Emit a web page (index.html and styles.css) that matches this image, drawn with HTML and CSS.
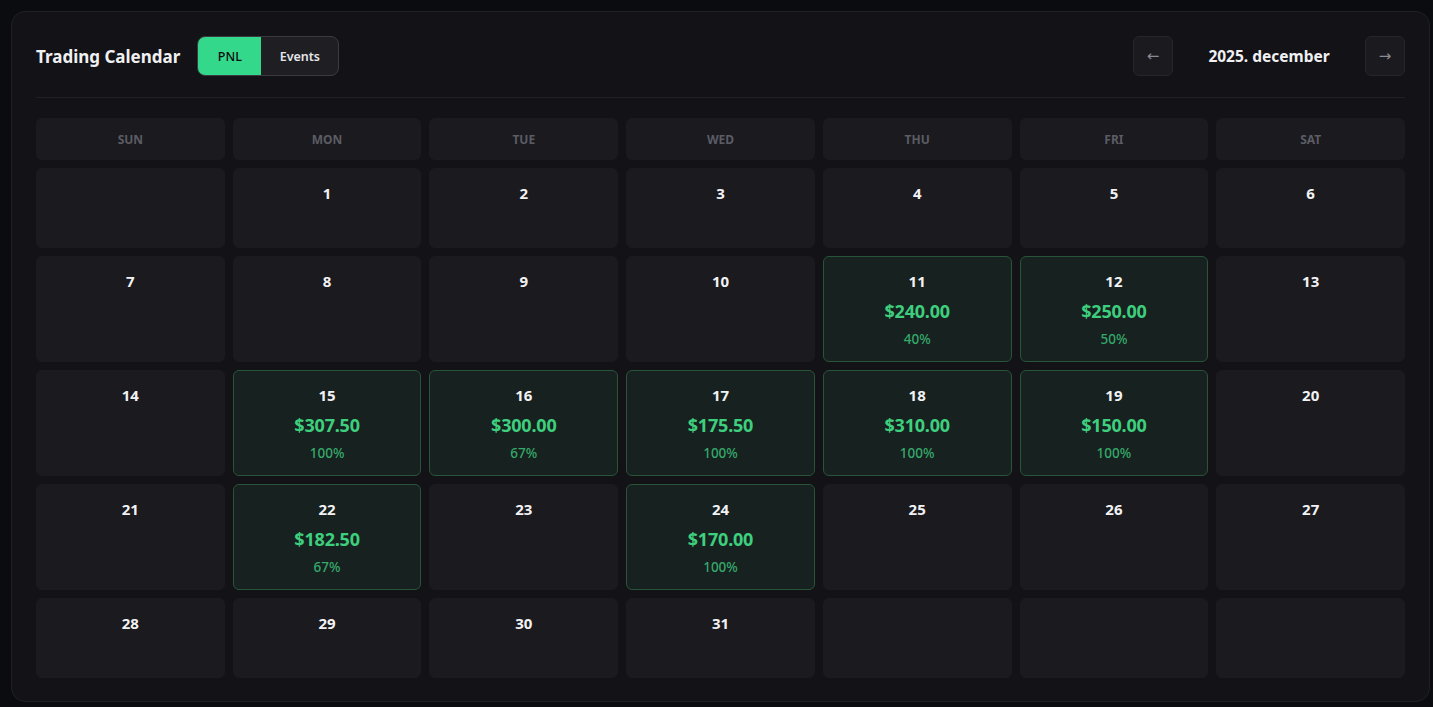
FILE: index.html
```html
<!DOCTYPE html>
<html>
<head>
<meta charset="utf-8">
<link rel="stylesheet" href="styles.css">
</head>
<body>
<div class="card">
  <div class="header">
    <div class="left">
      <h1 class="title">Trading Calendar</h1>
      <div class="toggle">
        <button class="tab active">PNL</button>
        <button class="tab">Events</button>
      </div>
    </div>
    <div class="nav">
      <button class="navbtn">&larr;</button>
      <div class="month">2025. december</div>
      <button class="navbtn">&rarr;</button>
    </div>
  </div>
  <div class="grid">
    <div class="dow">SUN</div><div class="dow">MON</div><div class="dow">TUE</div><div class="dow">WED</div><div class="dow">THU</div><div class="dow">FRI</div><div class="dow">SAT</div>

    <div class="cell"></div>
    <div class="cell"><div class="d">1</div></div>
    <div class="cell"><div class="d">2</div></div>
    <div class="cell"><div class="d">3</div></div>
    <div class="cell"><div class="d">4</div></div>
    <div class="cell"><div class="d">5</div></div>
    <div class="cell"><div class="d">6</div></div>

    <div class="cell"><div class="d">7</div></div>
    <div class="cell"><div class="d">8</div></div>
    <div class="cell"><div class="d">9</div></div>
    <div class="cell"><div class="d">10</div></div>
    <div class="cell win"><div class="d">11</div><div class="amt">$240.00</div><div class="pct">40%</div></div>
    <div class="cell win"><div class="d">12</div><div class="amt">$250.00</div><div class="pct">50%</div></div>
    <div class="cell"><div class="d">13</div></div>

    <div class="cell"><div class="d">14</div></div>
    <div class="cell win"><div class="d">15</div><div class="amt">$307.50</div><div class="pct">100%</div></div>
    <div class="cell win"><div class="d">16</div><div class="amt">$300.00</div><div class="pct">67%</div></div>
    <div class="cell win"><div class="d">17</div><div class="amt">$175.50</div><div class="pct">100%</div></div>
    <div class="cell win"><div class="d">18</div><div class="amt">$310.00</div><div class="pct">100%</div></div>
    <div class="cell win"><div class="d">19</div><div class="amt">$150.00</div><div class="pct">100%</div></div>
    <div class="cell"><div class="d">20</div></div>

    <div class="cell"><div class="d">21</div></div>
    <div class="cell win"><div class="d">22</div><div class="amt">$182.50</div><div class="pct">67%</div></div>
    <div class="cell"><div class="d">23</div></div>
    <div class="cell win"><div class="d">24</div><div class="amt">$170.00</div><div class="pct">100%</div></div>
    <div class="cell"><div class="d">25</div></div>
    <div class="cell"><div class="d">26</div></div>
    <div class="cell"><div class="d">27</div></div>

    <div class="cell"><div class="d">28</div></div>
    <div class="cell"><div class="d">29</div></div>
    <div class="cell"><div class="d">30</div></div>
    <div class="cell"><div class="d">31</div></div>
    <div class="cell"></div>
    <div class="cell"></div>
    <div class="cell"></div>
  </div>
</div>
</body>
</html>
```
FILE: styles.css
```css
* { box-sizing: border-box; }
html, body { margin: 0; padding: 0; }
body {
  background: #0b0c10;
  font-family: "Noto Sans", "Open Sans", sans-serif;
  color: #f0f0f2;
  padding: 11px 3px 5px 11px;
  height: 707px;
}
.card {
  background: #131317;
  border: 1px solid #1f2026;
  border-radius: 14px;
  padding: 24px 24px 23px 24px;
  width: 1419px;
}
.header {
  display: flex;
  justify-content: space-between;
  align-items: center;
  padding-bottom: 21px;
  border-bottom: 1px solid #1f2026;
  margin-bottom: 20px;
}
.left { display: flex; align-items: center; gap: 17px; }
.title {
  margin: 0;
  font-size: 17px;
  font-weight: 700;
  color: #f0f0f2;
}
.toggle {
  display: flex;
  height: 40px;
  border: 1px solid #3a3a40;
  border-radius: 8px;
  overflow: hidden;
  background: #1e1e23;
}
.tab {
  border: 0;
  background: transparent;
  color: #e6e6ea;
  font-family: inherit;
  font-size: 12.5px;
  font-weight: 600;
  padding: 0;
  cursor: pointer;
}
.tab:first-child { width: 63px; }
.tab:last-child { width: 77px; }
.tab.active { background: #34d88a; color: #0b0c10; font-weight: 500; }
.nav { display: flex; align-items: center; }
.navbtn {
  width: 40px;
  height: 40px;
  border: 1px solid #25252b;
  border-radius: 6px;
  background: #1a1a1f;
  color: #8a8a92;
  font-size: 15px;
  font-family: "DejaVu Sans", sans-serif;
  padding: 0;
}
.month {
  width: 192px;
  text-align: center;
  font-size: 15.5px;
  font-weight: 700;
  color: #f0f0f2;
}
.grid {
  display: grid;
  grid-template-columns: repeat(7, 1fr);
  gap: 8px;
}
.dow {
  height: 42px;
  background: #1a1a1f;
  border-radius: 6px;
  display: flex;
  align-items: center;
  justify-content: center;
  font-size: 12px;
  font-weight: 700;
  color: #5c5c64;
}
.cell {
  min-height: 80px;
  background: #1a1a1f;
  border: 1px solid #1a1a1f;
  border-radius: 6px;
  padding: 13px 8px 13px;
  display: flex;
  flex-direction: column;
  align-items: center;
}
.d {
  font-size: 15px;
  font-weight: 700;
  line-height: 22px;
  color: #f2f2f4;
}
.win {
  background: #172120;
  border-color: #28543a;
}
.amt {
  margin-top: 7px;
  font-size: 18px;
  font-weight: 700;
  line-height: 24px;
  color: #3ecf7e;
  letter-spacing: -0.2px;
}
.pct {
  margin-top: 7px;
  font-size: 13.5px;
  font-weight: 500;
  line-height: 18px;
  color: #35a96a;
}
```
